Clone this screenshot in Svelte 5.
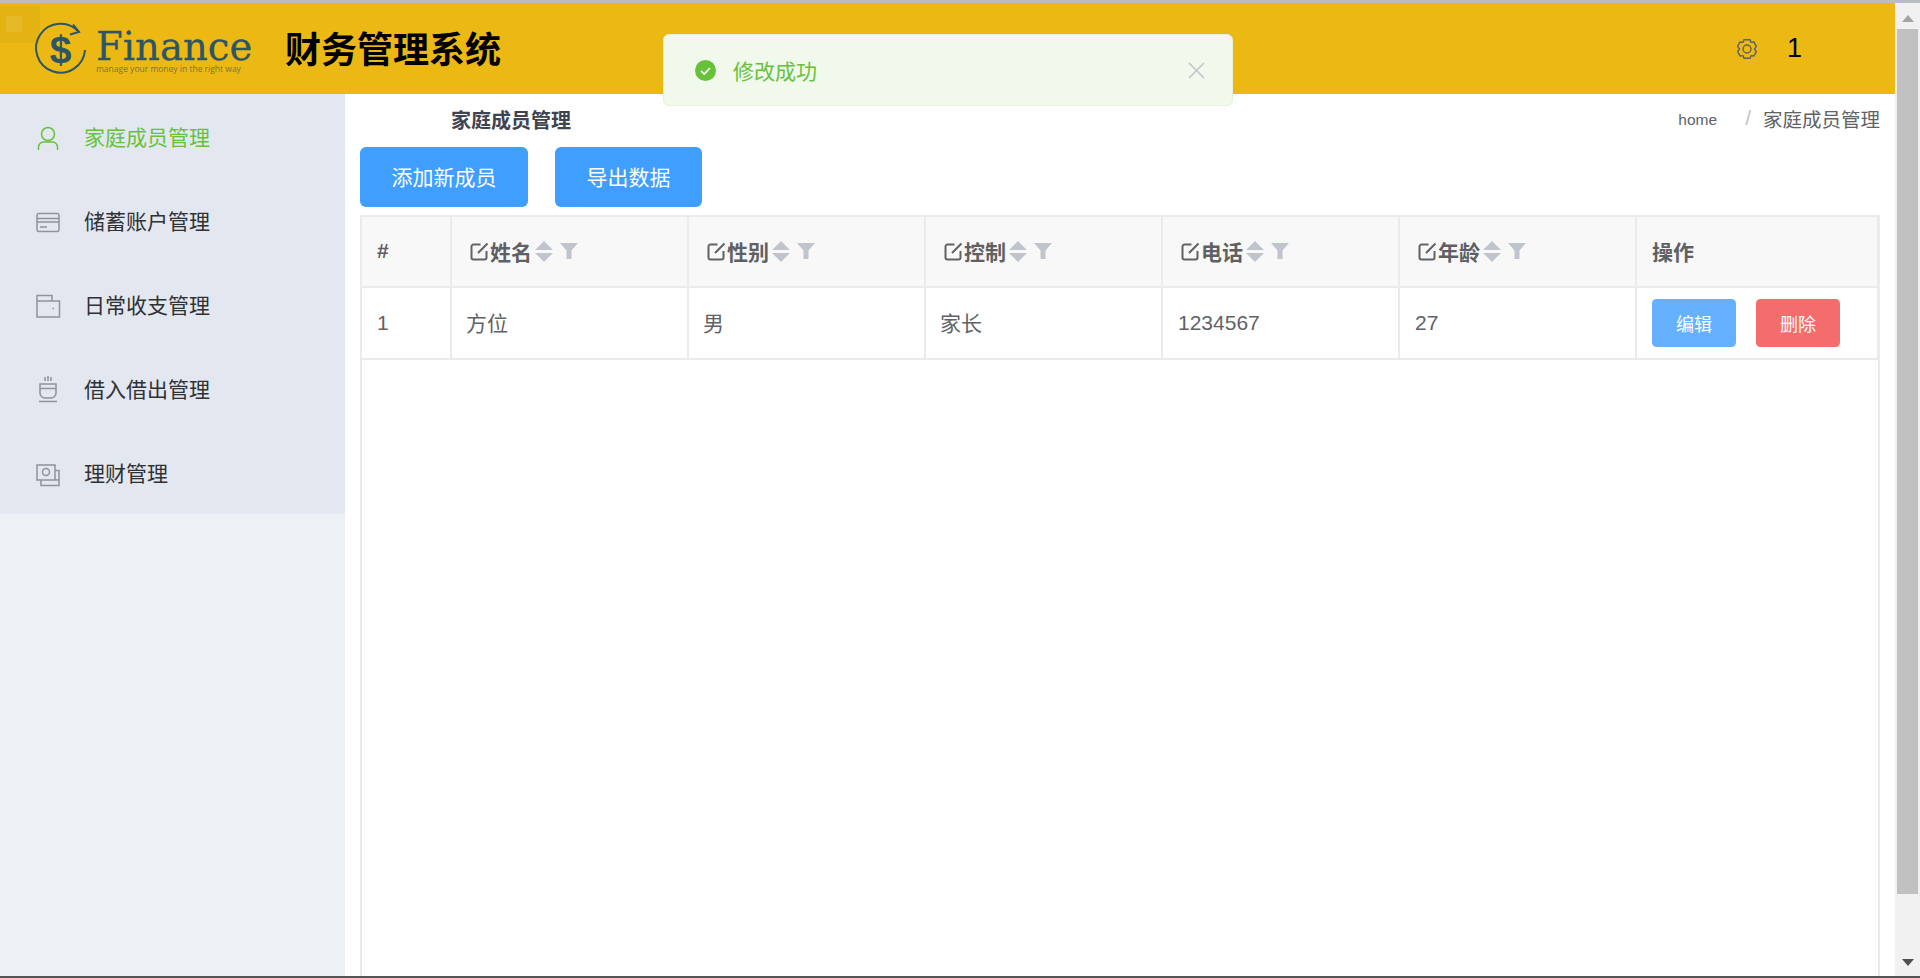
<script>
  const menu = [
    { label: '家庭成员管理', icon: 'user', active: true },
    { label: '储蓄账户管理', icon: 'card' },
    { label: '日常收支管理', icon: 'wallet' },
    { label: '借入借出管理', icon: 'coffee' },
    { label: '理财管理', icon: 'money' }
  ];
  const cols = ['姓名', '性别', '控制', '电话', '年龄'];
  const row = [
    { text: '1' },
    { text: '方位', cjk: true },
    { text: '男', cjk: true },
    { text: '家长', cjk: true },
    { text: '1234567' },
    { text: '27' }
  ];
</script>

<div class="page">
  <div class="topline"></div>
  <div class="middle">
    <div class="window">
      <header class="header">
        <svg class="logo" width="260" height="91" viewBox="0 0 260 91">
          <rect x="0" y="3" width="40" height="37" fill="#000" opacity="0.035" />
          <rect x="6" y="13" width="16" height="16" rx="2" fill="#fff" opacity="0.09" />
          <path d="M79 29A24.5 24.5 0 1 0 85 47" fill="none" stroke="#2c5566" stroke-width="2" />
          <path d="M73 21.500L79 29L70 31.500" fill="none" stroke="#2c5566" stroke-width="2" />
          <text x="60.500" y="60" text-anchor="middle" class="dollar">$</text>
          <text x="96" y="57" class="brand">Finance</text>
          <text x="96" y="69" class="tag">manage your money in the right way</text>
        </svg>
        <h1 class="title">财务管理系统</h1>
        <div class="user">
          <svg class="gear" width="22" height="22" viewBox="0 0 20 20" fill="none" stroke="#5f6063" stroke-width="1.300">
            <path d="M7.200 1.600h5.600l.9 2.400 2.600-.4 2.200 4-1.700 2.400 1.700 2.400-2.200 3.900-2.600-.3-.9 2.400H7.200l-.9-2.400-2.600.3-2.200-3.900L3.200 10 1.500 7.600l2.200-4 2.600.4z" stroke-linejoin="round" />
            <circle cx="10" cy="10" r="3.600" />
          </svg>
          <span class="num">1</span>
        </div>
      </header>
      <div class="body">
        <nav class="side">
          <ul class="menu">
            {#each menu as item}
              <li class="item" class:active={item.active}>
                <svg class="mi" width="24" height="24" viewBox="0 0 24 24" fill="none" stroke="currentColor" stroke-width="1.500">
                  {#if item.icon === 'user'}
                    <circle cx="12" cy="8" r="6.500" />
                    <path d="M2.500 24v-3a5 5 0 0 1 5-5h9a5 5 0 0 1 5 5v3" />
                  {:else if item.icon === 'card'}
                    <rect x="1" y="3.500" width="22" height="18" rx="2" />
                    <path d="M1 8.500h22M1 12h22M4 17h7" />
                  {:else if item.icon === 'wallet'}
                    <path d="M1 7V1.500h15V7M1 7h22.500v16H1zM16.500 14.500h1.500" />
                  {:else if item.icon === 'coffee'}
                    <path d="M4 6h16v9a5 5 0 0 1-5 5H9a5 5 0 0 1-5-5zM4 10.500h16M3 23.500h18M9-1v4M12-2v5M15-1v4" />
                  {:else}
                    <rect x="1" y="3" width="18" height="15" />
                    <circle cx="10" cy="10" r="3.500" />
                    <path d="M5 18v5.500h18V8.500h-4M19 18h4" />
                  {/if}
                </svg>
                <span>{item.label}</span>
              </li>
            {/each}
          </ul>
        </nav>
        <main class="main">
          <div class="crumbrow">
            <strong class="pagetitle">家庭成员管理</strong>
            <div class="crumbs">
              <span class="home">home</span>
              <span class="sep">/</span>
              <span>家庭成员管理</span>
            </div>
          </div>
          <div class="actions">
            <button class="btn">添加新成员</button>
            <button class="btn">导出数据</button>
          </div>
          <div class="tablewrap">
            <table>
              <colgroup>
                <col class="c0" />
                {#each cols as _}<col class="cn" />{/each}
                <col />
              </colgroup>
              <thead>
                <tr>
                  <th>#</th>
                  {#each cols as c}
                    <th>
                      <span class="thin">
                        <svg class="edit" width="19" height="19" viewBox="0 0 19 19" fill="none" stroke="#606266" stroke-width="2">
                          <path d="M10.500 2.500H3.500A2 2 0 0 0 1.500 4.500v11a2 2 0 0 0 2 2h11a2 2 0 0 0 2-2V9M8 11L17.500 1.500" />
                        </svg>
                        <span>{c}</span>
                        <svg class="sort" width="18" height="21" viewBox="0 0 18 21" fill="#c0c4cc">
                          <path d="M9 0L18 9H0zM9 21L0 12H18z" />
                        </svg>
                        <svg class="filter" width="18" height="16" viewBox="0 0 18 16" fill="#c0c4cc">
                          <path d="M0 0H18L11.500 7.500V16H6.500V7.500z" />
                        </svg>
                      </span>
                    </th>
                  {/each}
                  <th>操作</th>
                </tr>
              </thead>
              <tbody>
                <tr>
                  {#each row as cell}<td class:cjk={cell.cjk}>{cell.text}</td>{/each}
                  <td>
                    <span class="ops">
                      <button class="mini blue">编辑</button>
                      <button class="mini red">删除</button>
                    </span>
                  </td>
                </tr>
              </tbody>
            </table>
          </div>
        </main>
      </div>
      <div class="toast">
        <svg width="21" height="21" viewBox="0 0 21 21">
          <circle cx="10.500" cy="10.500" r="10.500" fill="#67c23a" />
          <path d="M6 10.800l3.200 3.200 5.800-6" fill="none" stroke="#fff" stroke-width="1.700" />
        </svg>
        <span class="toasttext">修改成功</span>
        <svg class="close" width="17" height="17" viewBox="0 0 17 17" stroke="#c0c4cc" stroke-width="1.500">
          <path d="M1 1L16 16M16 1L1 16" />
        </svg>
      </div>
    </div>
    <aside class="scroll">
      <svg class="arrow" width="12" height="7" viewBox="0 0 12 7"><path d="M6 0L12 7H0z" fill="#a3a3a3" /></svg>
      <div class="thumb"></div>
      <svg class="arrow" width="12" height="7" viewBox="0 0 12 7"><path d="M0 0H12L6 7z" fill="#505050" /></svg>
    </aside>
  </div>
  <div class="bottomline"></div>
</div>

<style>
  :global(body) {
    margin: 0;
    overflow: hidden;
    background: #fff;
    font-family: "Liberation Sans", "Noto Sans CJK SC", sans-serif;
  }
  .page {
    height: 978px;
    display: flex;
    flex-direction: column;
  }
  .topline {
    height: 3px;
    flex: none;
    background: #b9bcc2;
  }
  .bottomline {
    height: 2px;
    flex: none;
    background: #555;
  }
  .middle {
    flex: 1;
    min-height: 0;
    display: flex;
  }
  .window {
    flex: 1;
    min-width: 0;
    display: flex;
    flex-direction: column;
    position: relative;
  }
  .header {
    height: 91px;
    flex: none;
    display: flex;
    align-items: center;
    background: #ecb914;
  }
  .logo {
    flex: none;
  }
  .dollar {
    font: bold 39px "Liberation Sans", sans-serif;
    fill: #2c5566;
  }
  .brand {
    font: 38.600px "DejaVu Serif", serif;
    fill: #2c5566;
    stroke: #2c5566;
    stroke-width: 0.3px;
  }
  .tag {
    font: 8.500px "Open Sans", sans-serif;
    fill: #7b7341;
  }
  .title {
    margin: -3px 0 0 25px;
    font-size: 36px;
    font-weight: 700;
    color: #000;
  }
  .user {
    margin-left: auto;
    margin-right: 93px;
    display: flex;
    align-items: center;
    gap: 29px;
  }
  .gear {
    display: block;
  }
  .num {
    font-size: 27px;
    color: #000;
  }
  .body {
    flex: 1;
    min-height: 0;
    display: flex;
  }
  .side {
    width: 345px;
    flex: none;
    background: #edf1f6;
  }
  .menu {
    list-style: none;
    margin: 0;
    padding: 0;
    background: #e3e7f0;
  }
  .item {
    height: 84px;
    padding: 0 0 0 36px;
    box-sizing: border-box;
    display: flex;
    align-items: center;
    gap: 24px;
    font-size: 21px;
    color: #303133;
  }
  .item .mi {
    color: #909399;
    flex: none;
    margin-top: 4px;
    overflow: visible;
  }
  .item.active,
  .item.active .mi {
    color: #67c23a;
  }
  .main {
    flex: 1;
    min-width: 0;
    display: flex;
    flex-direction: column;
    padding: 0 15px;
  }
  .crumbrow {
    height: 53px;
    flex: none;
    display: flex;
    justify-content: space-between;
    padding: 10px 0 0 91px;
    box-sizing: border-box;
  }
  .pagetitle {
    font-size: 20px;
    line-height: 34px;
    color: #3f4450;
    font-weight: 700;
  }
  .crumbs {
    display: flex;
    align-items: center;
    height: 28px;
    font-size: 19.500px;
    color: #606266;
  }
  .home {
    font-size: 15.500px;
    color: #606266;
    padding-top: 4px;
  }
  .sep {
    color: #c0c4cc;
    font-size: 21px;
    margin: 0 12px 0 28px;
  }
  .actions {
    flex: none;
    display: flex;
    gap: 27px;
    margin-bottom: 8px;
  }
  .btn {
    height: 60px;
    padding: 0 31.500px 2px;
    border: 0;
    border-radius: 6px;
    background: #409eff;
    color: #fff;
    font: inherit;
    font-size: 21px;
  }
  .tablewrap {
    flex: 1;
    min-height: 0;
    width: 1520px;
    box-sizing: border-box;
    border: 2px solid #ebebeb;
    border-bottom: 0;
  }
  table {
    width: 100%;
    table-layout: fixed;
    border-collapse: separate;
    border-spacing: 0;
    color: #606266;
    font-size: 21px;
  }
  .c0 {
    width: 90px;
  }
  .cn {
    width: 237px;
  }
  th,
  td {
    border-right: 2px solid #ebebeb;
    border-bottom: 2px solid #ebebeb;
    padding: 0 15px;
    text-align: left;
    white-space: nowrap;
    overflow: hidden;
  }
  th:last-child,
  td:last-child {
    border-right-width: 1px;
  }
  th {
    height: 71px;
    box-sizing: border-box;
    background: #f8f8f9;
    font-weight: 700;
    color: #5f6063;
    font-size: 21px;
    padding-bottom: 2px;
  }
  td {
    height: 72px;
    box-sizing: border-box;
  }
  td.cjk {
    padding: 0 14px 2px;
  }
  .thin {
    display: flex;
    align-items: center;
  }
  .edit {
    margin: 1px 1px 0 3px;
  }
  .sort {
    margin: 1px 0 0 3px;
  }
  .filter {
    margin: 1px 0 0 7px;
  }
  .ops {
    display: flex;
    gap: 20px;
  }
  .mini {
    width: 84px;
    height: 48px;
    border: 0;
    border-radius: 4.500px;
    color: #fff;
    font: inherit;
    font-size: 18px;
    padding: 0;
  }
  .blue {
    background: #66b1ff;
  }
  .red {
    background: #f56c6c;
  }
  .toast {
    position: absolute;
    left: 663px;
    top: 31px;
    width: 570px;
    height: 72px;
    box-sizing: border-box;
    padding: 0 22px 0 31px;
    display: flex;
    align-items: center;
    gap: 17px;
    background: #f0f9eb;
    border: 1.500px solid #e1f3d8;
    border-radius: 6px;
  }
  .toasttext {
    font-size: 21px;
    color: #67c23a;
  }
  .close {
    margin-left: auto;
    margin-right: 5px;
  }
  .scroll {
    width: 25px;
    flex: none;
    box-sizing: border-box;
    background: #f1f1f1;
    display: flex;
    flex-direction: column;
    align-items: center;
    padding: 12px 0 10px;
  }
  .arrow {
    flex: none;
  }
  .thumb {
    width: 21px;
    height: 865px;
    margin: 7px 0 auto;
    background: #c1c1c1;
  }
</style>
